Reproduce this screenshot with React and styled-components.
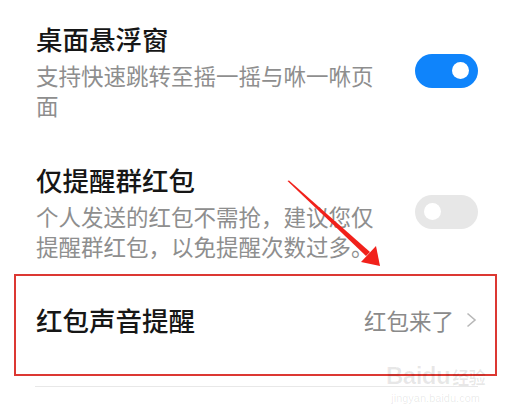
import React from "react";
import styled, { createGlobalStyle } from "styled-components";

const Global = createGlobalStyle`
  html, body { margin: 0; padding: 0; background: #fff; }
  body { font-family: "Noto Sans CJK SC", "Noto Sans", sans-serif; }
  * { box-sizing: border-box; }
`;

const Page = styled.div`
  position: relative;
  width: 506px;
  height: 418px;
  overflow: hidden;
  background: #fff;
  padding-top: 21px;
`;

const SettingRow = styled.div`
  display: flex;
  align-items: center;
  justify-content: space-between;
  padding: 0 28px 0 36px;
  margin-bottom: ${(p) => p.$gap || 0}px;
`;

const TextCol = styled.div`
  display: flex;
  flex-direction: column;
  gap: 3px;
  width: 345px;
`;

const Title = styled.div`
  font-size: 26.5px;
  line-height: 36px;
  color: #161616;
  font-weight: 500;
  white-space: nowrap;
`;

const Desc = styled.div`
  font-size: 22.5px;
  line-height: 30px;
  color: #8e8e8e;
`;

const Toggle = styled.div`
  width: 63px;
  height: 34px;
  border-radius: 17px;
  background: ${(p) => (p.$on ? "#0f84fb" : "#e7e7e7")};
  display: flex;
  align-items: center;
  justify-content: ${(p) => (p.$on ? "flex-end" : "flex-start")};
  padding: 0 9px;
  flex-shrink: 0;
`;

const Knob = styled.div`
  width: 17px;
  height: 17px;
  border-radius: 50%;
  background: #fff;
`;

const Highlight = styled.div`
  margin-left: 14px;
  width: 483px;
  border: 2px solid #dc3832;
  padding: 26px 18px 36px 20px;
`;

const LinkRow = styled.div`
  display: flex;
  align-items: center;
  justify-content: space-between;
`;

const Value = styled.div`
  display: flex;
  align-items: center;
  gap: 12px;
  font-size: 22.5px;
  line-height: 36px;
  color: #8a8a8a;
`;

const Divider = styled.div`
  margin: 10px 28px 0 35px;
  height: 1px;
  background: #e8e8e8;
`;

const ArrowLayer = styled.svg`
  position: absolute;
  left: 0;
  top: 0;
  pointer-events: none;
`;

const Watermark = styled.div`
  position: absolute;
  left: 386px;
  top: 362px;
  display: flex;
  flex-direction: column;
  align-items: center;
  color: rgba(0, 0, 0, 0.09);
  font-family: "Liberation Sans", sans-serif;
`;

const WmBrand = styled.div`
  font-size: 24px;
  font-weight: 700;
  line-height: 28px;
  letter-spacing: -0.5px;
  span { font-family: "Noto Sans CJK SC", sans-serif; font-size: 17px; margin-left: 2px; }
`;

const WmUrl = styled.div`
  font-size: 11px;
  line-height: 14px;
`;

export default function App() {
  return (
    <Page>
      <Global />
      <SettingRow $gap={42}>
        <TextCol>
          <Title>桌面悬浮窗</Title>
          <Desc>支持快速跳转至摇一摇与咻一咻页面</Desc>
        </TextCol>
        <Toggle $on>
          <Knob />
        </Toggle>
      </SettingRow>
      <SettingRow $gap={13}>
        <TextCol>
          <Title>仅提醒群红包</Title>
          <Desc>个人发送的红包不需抢，建议您仅提醒群红包，以免提醒次数过多。</Desc>
        </TextCol>
        <Toggle>
          <Knob />
        </Toggle>
      </SettingRow>
      <Highlight>
        <LinkRow>
          <Title>红包声音提醒</Title>
          <Value>
            红包来了
            <svg width="11" height="16" viewBox="0 0 11 16">
              <path d="M1.5 1.5 L9 8 L1.5 14.5" fill="none" stroke="#b8b8b8" strokeWidth="1.6" />
            </svg>
          </Value>
        </LinkRow>
      </Highlight>
      <Divider />
      <Watermark>
        <WmBrand>
          Baidu<span>经验</span>
        </WmBrand>
        <WmUrl>jingyan.baidu.com</WmUrl>
      </Watermark>
      <ArrowLayer width="506" height="418" viewBox="0 0 506 418">
        <polygon points="287.5,181 289,180.5 370,252 366,256" fill="#f1211b" />
        <polygon points="380,266 376,246 361,262" fill="#f1211b" />
      </ArrowLayer>
    </Page>
  );
}
